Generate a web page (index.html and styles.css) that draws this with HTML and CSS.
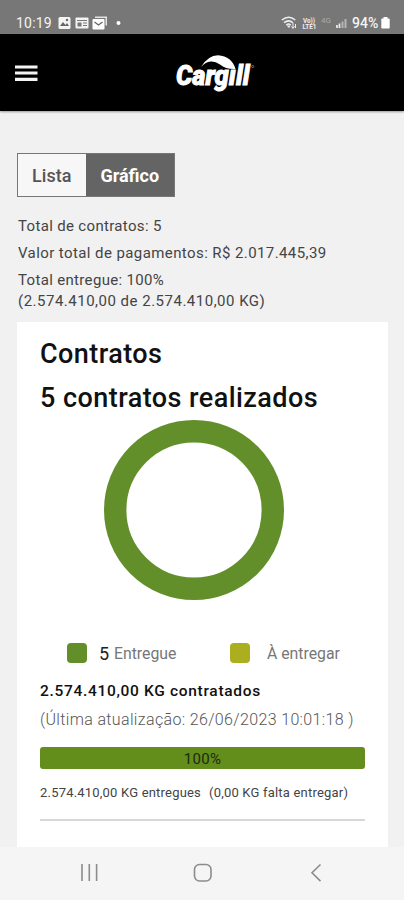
FILE: index.html
```html
<!DOCTYPE html>
<html lang="pt-BR">
<head>
<meta charset="utf-8">
<title>Contratos</title>
<link rel="stylesheet" href="styles.css">
</head>
<body>
<div class="status">
  <span class="time">10:19</span>
  <svg class="notes" width="66" height="14" viewBox="0 0 66 14">
    <rect x="0.5" y="1" width="12" height="12" rx="1.5" fill="#f4f4f4"/>
    <path d="M2 10l3-4 2.500 3 1.500-2 2 3z" fill="#666"/><circle cx="9" cy="4" r="1.200" fill="#666"/>
    <rect x="17.500" y="1.500" width="13" height="11" rx="1" fill="#f4f4f4"/>
    <path d="M19 4.500h10M25 7h4M25 9.500h4" stroke="#777" stroke-width="1"/><rect x="19.500" y="6.500" width="4" height="4" fill="#777"/>
    <path d="M37 2V0.500h12v9h-1.500V2z" fill="#e4e4e4"/>
    <rect x="34.500" y="3" width="12" height="10.500" rx="1" fill="#fff"/>
    <path d="M36.500 6l4 3 4-3" fill="none" stroke="#666" stroke-width="1.300"/>
    <circle cx="60.500" cy="7" r="2" fill="#fff"/>
  </svg>
  <svg class="signals" width="71" height="16" viewBox="0 0 71 16">
    <g fill="none" stroke="#eee" stroke-width="1.500">
      <path d="M0.800 5q7-5.500 13.500 0M3 7.700q4.700-3.700 9 0M5.300 10q2.300-1.800 4.500 0"/>
    </g>
    <path d="M5.500 10.500h4L8 13z" fill="#eee"/>
    <path d="M12 8v5M10.500 11.500l1.500 2 1.500-2M14.500 13V9" fill="none" stroke="#eee" stroke-width="1"/>
    <text x="22" y="7.500" class="tiny" textLength="12" lengthAdjust="spacingAndGlyphs">Vo))</text>
    <text x="21.500" y="14" class="tiny" textLength="14" lengthAdjust="spacingAndGlyphs">LTE1</text>
    <text x="40" y="7.500" class="net" textLength="10" lengthAdjust="spacingAndGlyphs">4G</text>
    <path d="M56 13v-3M58.500 13V8.500" stroke="#eee" stroke-width="1.700"/>
    <path d="M61.500 13V6.500M64.500 13V4" stroke="#b5b5b5" stroke-width="2"/>
  </svg>
  <span class="battery">94%</span>
  <svg class="cell" width="9" height="12" viewBox="0 0 9 12"><path d="M2.500 0h4v1.500H8q.7 0 .7.700v8.500q0 .8-.7.800H1q-.7 0-.7-.8V2.200q0-.7.700-.7h1.500z" fill="#fff"/></svg>
</div>
<header class="header">
  <svg class="menu" width="23" height="17" viewBox="0 0 23 17"><path d="M0 2h22.500M0 8h22.500M0 14.300h22.500" stroke="#f4f4f4" stroke-width="3.200"/></svg>
  <svg class="logo" width="82" height="42" viewBox="0 0 82 42">
    <text x="1" y="34" class="brand" textLength="73.500" lengthAdjust="spacingAndGlyphs">Cargıll</text>
    <path d="M26 16Q33 4.500 43 4.300Q57 5.500 60.500 18Q51 18.500 45 13.500Q35 6.500 26 16z" fill="#fff"/>
    <circle cx="77.700" cy="15.500" r="1.100" fill="none" stroke="#999" stroke-width=".7"/>
  </svg>
</header>
<main class="content">
  <div class="toggle"><div class="tab">Lista</div><div class="tab active">Gráfico</div></div>
  <div class="summary">
    <p class="s1">Total de contratos: 5</p>
    <p class="s2">Valor total de pagamentos: R$ 2.017.445,39</p>
    <p class="s3">Total entregue: 100%</p>
    <p class="s4">(2.574.410,00 de 2.574.410,00 KG)</p>
  </div>
  <section class="card">
    <h1 class="title">Contratos</h1>
    <h2 class="title made">5 contratos realizados</h2>
    <svg class="donut" width="180" height="180" viewBox="0 0 180 180"><circle cx="90" cy="90" r="78.800" fill="none" stroke="#628f2a" stroke-width="22.400"/></svg>
    <div class="legend">
      <i class="swatch"></i><b class="count">5</b><span class="done">Entregue</span>
      <i class="swatch pending"></i><span class="todo">À entregar</span>
    </div>
    <p class="total">2.574.410,00 KG contratados</p>
    <p class="updated">(Última atualização: 26/06/2023 10:01:18 )</p>
    <div class="bar">100%</div>
    <p class="delivered"><span>2.574.410,00 KG entregues</span><span>(0,00 KG falta entregar)</span></p>
    <hr class="rule">
  </section>
</main>
<nav class="nav">
  <svg width="404" height="53" viewBox="0 0 404 53" fill="none" stroke="#8c8c8c" stroke-width="1.600">
    <path d="M82 17v17M89.300 17v17M96.600 17v17"/>
    <rect x="194.500" y="17.500" width="16.500" height="16.500" rx="5"/>
    <path d="M320.500 17.500l-8.500 8.300 8.500 8.300"/>
  </svg>
</nav>
</body>
</html>
```

FILE: styles.css
```css
* { box-sizing: border-box; }
body { margin: 0; width: 404px; height: 900px; overflow: hidden; background: #f1f1f1; font-family: Roboto, sans-serif; color: #444; display: flex; flex-direction: column; }
p, h1, h2 { margin: 0; white-space: nowrap; }
svg { display: block; flex: none; }
.status { height: 34px; flex: none; background: #777; display: flex; align-items: flex-start; color: #f4f4f4; font-size: 14px; line-height: 16px; }
.time { width: 42px; margin: 15px 0 0 16px; letter-spacing: .2px; }
.notes { margin-top: 16px; }
.signals { margin: 15px 0 0 157px; }
.battery { margin: 15px 0 0 0; width: 29px; font-weight: 500; }
.cell { margin-top: 17px; }
.tiny { font-size: 7px; font-weight: 700; fill: #eee; }
.net { font-size: 8px; fill: #aaa; }
.header { height: 77px; flex: none; background: #000; display: flex; box-shadow: 0 1px 2px #999; }
.menu { margin: 31px 0 0 15px; }
.logo { margin: 17px 0 0 137px; }
.brand { font-family: Roboto, sans-serif; font-size: 27px; font-weight: 900; font-style: italic; fill: #fff; stroke: #fff; stroke-width: .9px; }
.content { flex: none; height: 736px; padding: 42px 16px 0 17px; }
.toggle { display: flex; width: 158px; height: 44px; border: 1px solid #777; font-size: 18px; font-weight: 500; line-height: 43px; text-align: center; color: #555; background: #f7f7f7; }
.tab { width: 67.500px; }
.tab.active { width: 88.500px; background: #646464; color: #fff; font-weight: 700; }
.summary { padding: 18px 0 0 1px; font-size: 15px; line-height: 22px; height: 125px; letter-spacing: .41px; }
.s1, .s3 { letter-spacing: .33px; }
.s2, .s3 { margin-top: 5px; }
.s4 { margin-top: -1px; letter-spacing: .5px; }
.card { background: #fff; height: 525px; padding: 15px 23px 0; }
.title { font-size: 27px; font-weight: 500; line-height: 34px; color: #111; letter-spacing: .44px; }
.made { margin-top: 10px; }
.donut { margin: 5px 0 0 64px; }
.legend { display: flex; align-items: center; height: 22px; margin: 42px 0 0 27px; font-size: 15.800px; color: #777; white-space: nowrap; }
.swatch { width: 20px; height: 20px; border-radius: 4px; background: #628f2a; flex: none; }
.count { margin-left: 12px; width: 15px; font-weight: 400; font-size: 18px; color: #222; }
.done { width: 116px; }
.pending { background: #abae1f; }
.todo { margin-left: 17px; }
.total { margin-top: 16px; font-size: 15.500px; line-height: 22px; font-weight: 500; color: #111; letter-spacing: .68px; }
.updated { margin-top: 7px; font-size: 16px; line-height: 22px; font-weight: 300; color: #555; letter-spacing: .35px; }
.bar { margin-top: 16px; width: 325px; height: 22px; border-radius: 3px; background: #638e1b; color: #1b2a10; font-size: 15px; line-height: 24px; text-align: center; letter-spacing: .3px; }
.delivered { display: flex; gap: 8px; margin-top: 14px; font-size: 13px; line-height: 20px; color: #444; letter-spacing: .2px; }
.rule { width: 325px; margin: 16px 0 0; border: 0; border-top: 2px solid #d7d7d7; }
.nav { height: 53px; background: #f5f5f5; }
```
